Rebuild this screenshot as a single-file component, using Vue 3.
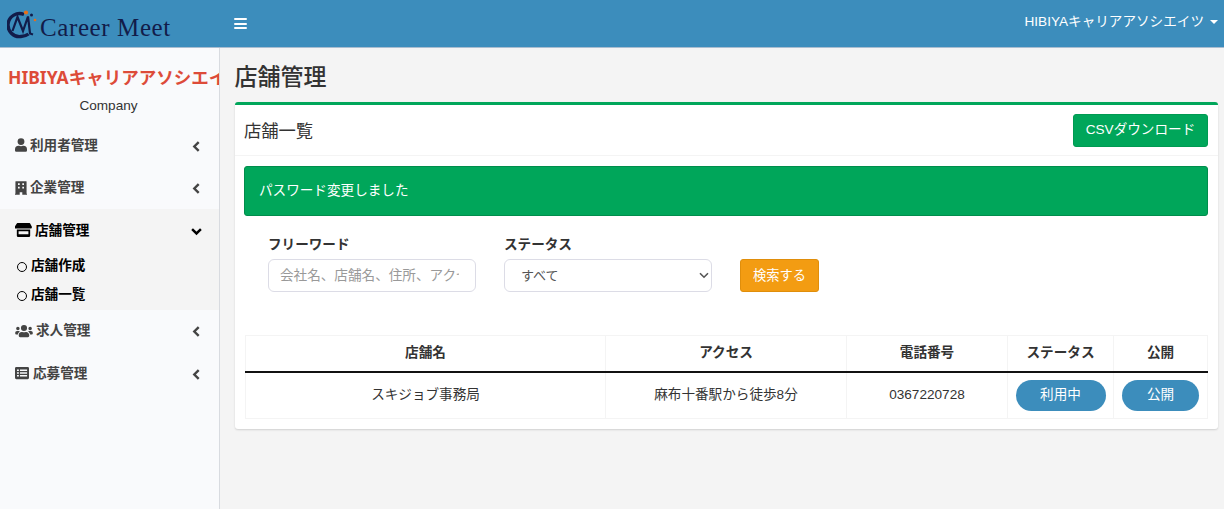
<template>
  <div class="page">
    <header class="topbar">
      <div class="brand">
        <svg class="logo" viewBox="0 0 30 30" width="30" height="30">
          <path d="M17 4.500A11.500 11.500 0 1 0 14 26.500c3 0 5.500-1 7.500-2.500" fill="none" stroke="#121c4a" stroke-width="3.400" />
          <path d="M5.500 21 10.500 7l5.500 14 5-14.500 2 17 3 1" fill="none" stroke="#121c4a" stroke-width="2.200" />
          <circle cx="19" cy="2.500" r="2.100" fill="#e8701a" />
          <circle cx="28" cy="10" r="1.300" fill="#e8701a" />
          <circle cx="24.500" cy="5" r="1.500" fill="#121c4a" />
        </svg>
        <span class="brand-name">Career Meet</span>
      </div>
      <button class="burger" type="button" aria-label="menu">
        <span></span><span></span><span></span>
      </button>
      <div class="account">
        HIBIYAキャリアアソシエイツ
        <i class="caret"></i>
      </div>
    </header>

    <div class="body">
      <aside class="sidebar">
        <div class="profile">
          <div class="profile-name">HIBIYAキャリアアソシエイツ</div>
          <div class="profile-role">Company</div>
        </div>
        <nav>
          <div v-for="item in menu" :key="item.label" class="group" :class="{ open: item.children }">
            <div class="menu-row">
              <svg class="menu-icon" :viewBox="item.box" :style="{ width: item.w + 'px', marginRight: item.gap + 'px' }" v-html="item.icon"></svg>
              <span class="menu-label">{{ item.label }}</span>
              <svg v-if="item.children" class="chev" viewBox="0 0 10 10">
                <path d="M1 2.800l4 4 4-4" fill="none" stroke="currentColor" stroke-width="2.200" />
              </svg>
              <svg v-else class="chev" viewBox="0 0 10 10">
                <path d="M7 1L3 5l4 4" fill="none" stroke="currentColor" stroke-width="2.200" />
              </svg>
            </div>
            <div v-if="item.children" class="submenu">
              <div v-for="c in item.children" :key="c" class="sub-row">
                <i class="ring"></i>{{ c }}
              </div>
            </div>
          </div>
        </nav>
      </aside>

      <main class="main">
        <h1 class="title">店舗管理</h1>
        <section class="card">
          <div class="card-head">
            <h2>店舗一覧</h2>
            <button class="btn-csv" type="button">CSVダウンロード</button>
          </div>
          <div class="card-body">
            <div class="alert">パスワード変更しました</div>
            <form class="search" @submit.prevent>
              <div class="field">
                <label>フリーワード</label>
                <input type="text" placeholder="会社名、店舗名、住所、アクセス" />
              </div>
              <div class="field">
                <label>ステータス</label>
                <div class="select-wrap">
                  <select>
                    <option>すべて</option>
                  </select>
                  <svg class="select-arrow" viewBox="0 0 10 7">
                    <path d="M1 1.200l4 4 4-4" fill="none" stroke="#555" stroke-width="1.600" />
                  </svg>
                </div>
              </div>
              <button class="btn-search" type="submit">検索する</button>
            </form>
            <table class="list">
              <thead>
                <tr>
                  <th class="c1">店舗名</th>
                  <th class="c2">アクセス</th>
                  <th class="c3">電話番号</th>
                  <th class="c4">ステータス</th>
                  <th class="c5">公開</th>
                </tr>
              </thead>
              <tbody>
                <tr>
                  <td>スキジョブ事務局</td>
                  <td>麻布十番駅から徒歩8分</td>
                  <td>0367220728</td>
                  <td><span class="pill wide">利用中</span></td>
                  <td><span class="pill">公開</span></td>
                </tr>
              </tbody>
            </table>
          </div>
        </section>
      </main>
    </div>
  </div>
</template>

<script setup>
const menu = [
  {
    label: '利用者管理',
    w: 12,
    gap: 3,
    box: '0 0 448 512',
    icon: '<path fill="currentColor" d="M224 256a128 128 0 1 0 0-256 128 128 0 0 0 0 256zm90 32h-17a174 174 0 0 1-146 0h-17A134 134 0 0 0 0 422v42a48 48 0 0 0 48 48h352a48 48 0 0 0 48-48v-42a134 134 0 0 0-134-134z"/>'
  },
  {
    label: '企業管理',
    w: 12,
    gap: 3,
    box: '0 0 448 512',
    icon: '<path fill="currentColor" fill-rule="evenodd" d="M30 0h388a14 14 0 0 1 14 14v458h16v40H272v-96h-96v96H0v-40h16V14A14 14 0 0 1 30 0zm82 80v64h64V80zm160 0v64h64V80zM112 208v64h64v-64zm160 0v64h64v-64z"/>'
  },
  {
    label: '店舗管理',
    w: 17,
    gap: 3,
    box: '0 0 616 512',
    icon: '<path fill="currentColor" fill-rule="evenodd" d="M90 0h436a24 24 0 0 1 20 11l64 120c14 30-6 69-42 69H8C-28 200-22 161-8 131L70 11A24 24 0 0 1 90 0zM64 240h488v224a48 48 0 0 1-48 48H112a48 48 0 0 1-48-48zm64 60v110h360V300z"/>',
    children: ['店舗作成', '店舗一覧']
  },
  {
    label: '求人管理',
    w: 18,
    gap: 3,
    box: '0 0 640 512',
    icon: '<path fill="currentColor" d="M96 224a64 64 0 1 0 0-128 64 64 0 0 0 0 128zm448 0a64 64 0 1 0 0-128 64 64 0 0 0 0 128zm32 32h-64c-18 0-34 7-45 19 40 22 69 62 75 109h66c18 0 32-14 32-32v-32c0-35-29-64-64-64zm-256 0a112 112 0 1 0 0-224 112 112 0 0 0 0 224zm77 32h-8a157 157 0 0 1-138 0h-8A115 115 0 0 0 128 403v29c0 27 21 48 48 48h288c27 0 48-21 48-48v-29c0-64-52-115-115-115zm-224-13c-11-12-27-19-45-19H64c-35 0-64 29-64 64v32c0 18 14 32 32 32h66c6-47 35-87 75-109z"/>'
  },
  {
    label: '応募管理',
    w: 14,
    gap: 4,
    box: '0 0 512 512',
    icon: '<path fill="currentColor" fill-rule="evenodd" d="M48 32h416a48 48 0 0 1 48 48v352a48 48 0 0 1-48 48H48a48 48 0 0 1-48-48V80a48 48 0 0 1 48-48zm24 96v56h70v-56zm0 100v56h70v-56zm0 100v56h70v-56zm110-200v56h260v-56zm0 100v56h260v-56zm0 100v56h260v-56z"/>'
  }
]
</script>

<style>
html,
body {
  margin: 0;
  background: #f4f4f4;
}
</style>

<style scoped>
.page {
  width: 1224px;
  height: 509px;
  overflow: hidden;
  display: flex;
  flex-direction: column;
  font-family: "Liberation Sans", "Noto Sans CJK JP", sans-serif;
  font-size: 13.6px;
  line-height: 1.5;
  color: #212529;
}

.topbar {
  flex: none;
  height: 47px;
  border-bottom: 1px solid #a9bdd0;
  background: #3c8dbc;
  display: flex;
  align-items: center;
  color: #fff;
}

.brand {
  width: 219px;
  display: flex;
  align-items: center;
  padding-left: 7px;
  box-sizing: border-box;
}

.logo {
  flex: none;
  margin-top: 2px;
}

.brand-name {
  margin-left: 3px;
  margin-top: 8px;
  font-family: "Liberation Serif", serif;
  font-size: 25px;
  letter-spacing: 0.6px;
  color: #121c4a;
  white-space: nowrap;
}

.burger {
  margin-left: 15px;
  width: 13px;
  padding: 0;
  border: 0;
  background: none;
  display: flex;
  flex-direction: column;
  gap: 2.5px;
}

.burger span {
  height: 2px;
  background: #fff;
  border-radius: 1px;
}

.account {
  margin-left: auto;
  padding: 0 6px 2px 0;
  display: flex;
  align-items: center;
  white-space: nowrap;
}

.caret {
  margin-left: 6px;
  border: 4px solid transparent;
  border-top-color: #fff;
  border-bottom: 0;
}

.body {
  flex: 1;
  display: flex;
  min-height: 0;
}

.sidebar {
  flex: none;
  width: 220px;
  box-sizing: border-box;
  border-right: 1px solid #d8dbe0;
  background: #f9fafc;
  overflow: hidden;
}

.profile {
  padding-top: 17px;
  height: 59px;
}

.profile-name {
  padding-left: 8px;
  white-space: nowrap;
  font-family: "Noto Sans", "Noto Sans CJK JP", sans-serif;
  font-size: 17.5px;
  line-height: 24px;
  font-weight: 700;
  color: #dd4b39;
}

.profile-role {
  margin-top: 7px;
  padding-right: 2px;
  text-align: center;
  line-height: 20px;
  color: #333;
}

.group.open {
  background: #f4f4f4;
}

.menu-row {
  height: 42.5px;
  display: flex;
  align-items: center;
  padding: 0 17.5px 0 15px;
  color: #444;
  font-weight: 700;
}

.open .menu-row {
  color: #000;
}

.menu-icon {
  flex: none;
  height: 14px;
}

.menu-label {
  flex: 1;
  padding-top: 1px;
  white-space: nowrap;
}

.chev {
  width: 11px;
  height: 11px;
  margin-top: 2px;
  flex: none;
}

.sub-row {
  height: 29px;
  box-sizing: border-box;
  padding: 1px 0 0 17px;
  display: flex;
  align-items: center;
  font-weight: 700;
  color: #000;
}

.ring {
  width: 10px;
  height: 10px;
  margin: 0 4px 0 0;
  border: 1.5px solid #000;
  border-radius: 50%;
  box-sizing: border-box;
}

.main {
  flex: 1;
  min-width: 0;
  padding: 0 6px 0 14.5px;
}

.title {
  margin: 0;
  padding-top: 14px;
  height: 40px;
  font-size: 23px;
  line-height: 30px;
  font-weight: 500;
  color: #333;
}

.card {
  background: #fff;
  border-top: 3px solid #00a65a;
  border-radius: 3px;
  box-shadow: 0 1px 2px rgba(0, 0, 0, 0.15);
  height: 327px;
  box-sizing: border-box;
}

.card-head {
  height: 50px;
  display: flex;
  align-items: center;
  justify-content: space-between;
  padding: 0 10px 0 9.5px;
  border-bottom: 1px solid #f4f4f4;
}

.card-head h2 {
  margin: 0;
  padding-top: 3px;
  font-size: 17.3px;
  font-weight: 400;
  color: #333;
}

.btn-csv {
  width: 135px;
  height: 33px;
  padding: 0;
  border: 1px solid #009a52;
  border-radius: 3px;
  background: #00a65a;
  color: #fff;
  font: inherit;
}

.card-body {
  padding: 10px 10px 0 9.5px;
}

.alert {
  height: 50px;
  box-sizing: border-box;
  padding-left: 14px;
  display: flex;
  align-items: center;
  background: #00a65a;
  border: 1px solid #008d4c;
  border-radius: 3px;
  color: #fff;
}

.search {
  display: flex;
  align-items: flex-end;
  gap: 28px;
  padding: 19px 0 0 24px;
  height: 57px;
  margin-bottom: 43px;
}

.field {
  width: 208px;
  display: flex;
  flex-direction: column;
  gap: 5px;
}

.field label {
  font-weight: 700;
  line-height: 19px;
  color: #333;
}

.select-wrap {
  position: relative;
  height: 33px;
}

.select-arrow {
  position: absolute;
  right: 3px;
  top: 13px;
  width: 10px;
  height: 7px;
  pointer-events: none;
}

.field input,
.field select {
  display: block;
  width: 100%;
  height: 33px;
  box-sizing: border-box;
  border: 1px solid #dcdce6;
  border-radius: 6px;
  background: #fff;
  font: inherit;
  font-size: 13px;
  color: #555;
}

.field input {
  padding: 0 16px 0 11px;
  font-size: 13.6px;
}

.field input::placeholder {
  color: #999;
}

.field select {
  appearance: none;
  padding-left: 16px;
}

.btn-search {
  width: 79px;
  height: 33px;
  padding: 0;
  border: 1px solid #e08e0b;
  border-radius: 3px;
  background: #f39c12;
  color: #fff;
  font: inherit;
  font-size: 13.3px;
}

.list {
  width: 962px;
  margin-left: 1px;
  table-layout: fixed;
  border-collapse: collapse;
  color: #333;
}

.list th,
.list td {
  border: 1px solid #f4f4f4;
  text-align: center;
  padding: 0;
}

.list th {
  height: 35px;
  border-bottom: 2px solid #111;
  font-weight: 700;
}

.list td {
  height: 45px;
}

.c1 { width: 359px; }
.c2 { width: 240px; }
.c3 { width: 160px; }
.c4 { width: 105px; }
.c5 { width: 93px; }

.pill {
  display: inline-block;
  width: 77px;
  height: 31px;
  line-height: 30px;
  border-radius: 16px;
  background: #3c8dbc;
  color: #fff;
  vertical-align: middle;
}

.pill.wide {
  width: 90px;
}
</style>
